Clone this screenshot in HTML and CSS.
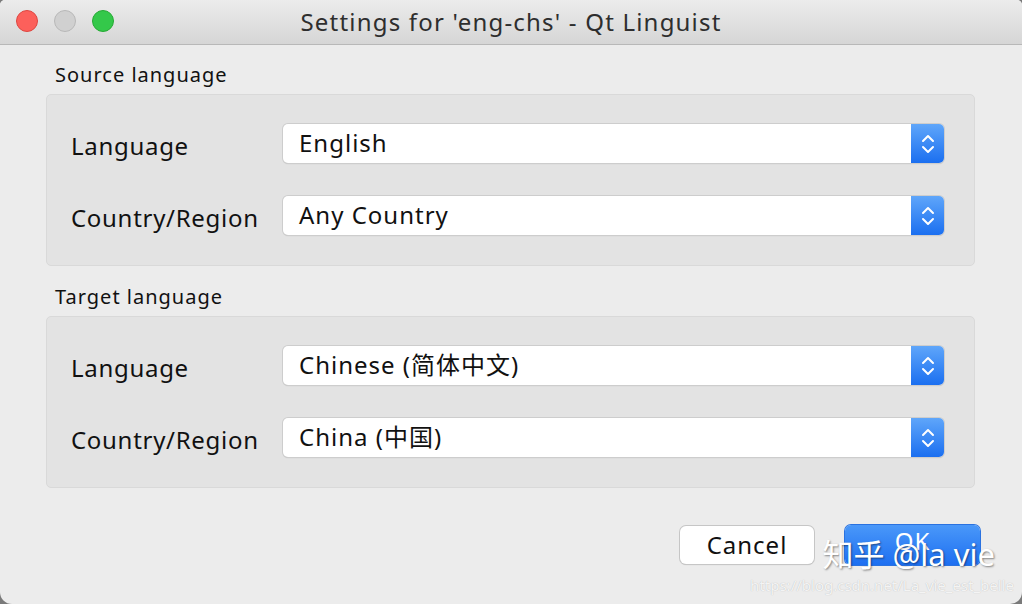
FILE: index.html
```html
<!DOCTYPE html>
<html lang="en">
<head>
    <meta charset="UTF-8">
    <title>Settings for 'eng-chs' - Qt Linguist</title>
    <link rel="stylesheet" href="styles.css">
</head>
<body>

<div class="window">
    <!-- barre de titre -->
    <div class="titlebar">
        <div class="lights">
            <span class="light red"></span>
            <span class="light gray"></span>
            <span class="light green"></span>
        </div>
        <div class="title">Settings for 'eng-chs' - Qt Linguist</div>
    </div>

    <div class="content">
        <div class="group-title">Source language</div>
        <div class="group">
            <div class="row">
                <span class="label">Language</span>
                <div class="combo"><span class="value">English</span><span class="arrows"><svg width="16" height="24" viewBox="0 0 16 24"><path d="M3 9 L8 4 L13 9 M3 15 L8 20 L13 15" fill="none" stroke="#fff" stroke-width="2" stroke-linecap="round" stroke-linejoin="round"/></svg></span></div>
            </div>
            <div class="row">
                <span class="label">Country/Region</span>
                <div class="combo"><span class="value">Any Country</span><span class="arrows"><svg width="16" height="24" viewBox="0 0 16 24"><path d="M3 9 L8 4 L13 9 M3 15 L8 20 L13 15" fill="none" stroke="#fff" stroke-width="2" stroke-linecap="round" stroke-linejoin="round"/></svg></span></div>
            </div>
        </div>

        <div class="group-title">Target language</div>
        <div class="group">
            <div class="row">
                <span class="label">Language</span>
                <div class="combo"><span class="value">Chinese (简体中文)</span><span class="arrows"><svg width="16" height="24" viewBox="0 0 16 24"><path d="M3 9 L8 4 L13 9 M3 15 L8 20 L13 15" fill="none" stroke="#fff" stroke-width="2" stroke-linecap="round" stroke-linejoin="round"/></svg></span></div>
            </div>
            <div class="row">
                <span class="label">Country/Region</span>
                <div class="combo"><span class="value">China (中国)</span><span class="arrows"><svg width="16" height="24" viewBox="0 0 16 24"><path d="M3 9 L8 4 L13 9 M3 15 L8 20 L13 15" fill="none" stroke="#fff" stroke-width="2" stroke-linecap="round" stroke-linejoin="round"/></svg></span></div>
            </div>
        </div>

        <div class="buttons">
            <button class="btn">Cancel</button>
            <button class="btn primary">OK</button>
        </div>
    </div>

    <!-- filigrane -->
    <div class="watermark">
        <div class="wm-main">知乎 @la vie</div>
        <div class="wm-url">https://blog.csdn.net/La_vie_est_belle</div>
    </div>
</div>

</body>
</html>
```

FILE: styles.css
```css
body {
    margin: 0;
    background-color: #7a7a7a;
    font-family: "Noto Sans", "Noto Sans CJK SC", sans-serif;
    color: #111;
}

.window {
    position: relative;
    width: 1022px;
    height: 604px;
    background-color: #ececec;
    border-radius: 5px 5px 12px 12px;
    overflow: hidden;
}

.titlebar {
    position: relative;
    height: 44px;
    background: linear-gradient(#ececec, #d6d6d6);
    border-bottom: 1px solid #b8b8b8;
    display: flex;
    align-items: center;
    justify-content: center;
}
.lights {
    position: absolute;
    left: 16px;
    top: 10px;
    display: flex;
    gap: 16px;
}
.light {
    width: 22px;
    height: 22px;
    border-radius: 50%;
    box-sizing: border-box;
}
.red {
    background-color: #fc605b;
    border: 1px solid #de4640;
}
.gray {
    background-color: #d0d0d0;
    border: 1px solid #b8b8b8;
}
.green {
    background-color: #34c84a;
    border: 1px solid #27aa35;
}
.title {
    font-size: 24px;
    letter-spacing: 1.2px;
    color: #2e2e2e;
    line-height: 30px;
}

.content {
    padding: 17px 47px 0 46px;
}
.group-title {
    font-size: 20px;
    letter-spacing: 1px;
    padding-left: 9px;
    height: 32px;
    line-height: 26px;
}
.group {
    background-color: #e3e3e3;
    border: 1px solid #d9d9d9;
    border-radius: 5px;
    padding: 29px 30px 30px 24px;
    display: flex;
    flex-direction: column;
    gap: 33px;
    margin-bottom: 18px;
}
.row {
    display: flex;
    align-items: center;
}
.label {
    width: 212px;
    font-size: 24px;
    letter-spacing: 0.7px;
    line-height: 30px;
    padding-top: 4px;
}
.combo {
    flex: 1;
    height: 39px;
    display: flex;
    background-color: #fff;
    border-radius: 5px;
    box-shadow: 0 0 0 1px #cdcdcd, 0 1px 1px rgba(0, 0, 0, 0.2);
    overflow: hidden;
}
.value {
    flex: 1;
    font-size: 24px;
    letter-spacing: 1px;
    padding-left: 16px;
    line-height: 37px;
}
.arrows {
    width: 33px;
    background: linear-gradient(#5fa6fa, #1b6ff0);
    display: flex;
    align-items: center;
    justify-content: center;
}

.buttons {
    display: flex;
    justify-content: flex-end;
    gap: 31px;
    padding-top: 20px;
    margin-right: -5px;
}
.btn {
    width: 134px;
    height: 38px;
    font-family: inherit;
    font-size: 24px;
    letter-spacing: 1px;
    line-height: 30px;
    background-color: #fff;
    border: none;
    border-radius: 6px;
    box-shadow: 0 0 0 1px #c6c6c6, 0 1px 1px rgba(0, 0, 0, 0.2);
    color: #111;
    padding: 0;
}
.primary {
    width: 135px;
    height: 40px;
    margin-top: -1px;
    padding-bottom: 8px;
    background: linear-gradient(#4a98f9, #1d6ff1);
    box-shadow: 0 0 0 1px #2a72e0;
    color: #fff;
}

.watermark {
    position: absolute;
    right: 8px;
    bottom: 10px;
    text-align: right;
    color: #fff;
}
.wm-main {
    font-size: 31px;
    line-height: 36px;
    padding-right: 19px;
    margin-bottom: 4px;
    text-shadow: 1px 1px 2px rgba(0, 0, 0, 0.45);
}
.wm-url {
    font-size: 15px;
    line-height: 18px;
    color: rgba(255, 255, 255, 0.85);
    text-shadow: 0 0 1px rgba(0, 0, 0, 0.25);
}
```
